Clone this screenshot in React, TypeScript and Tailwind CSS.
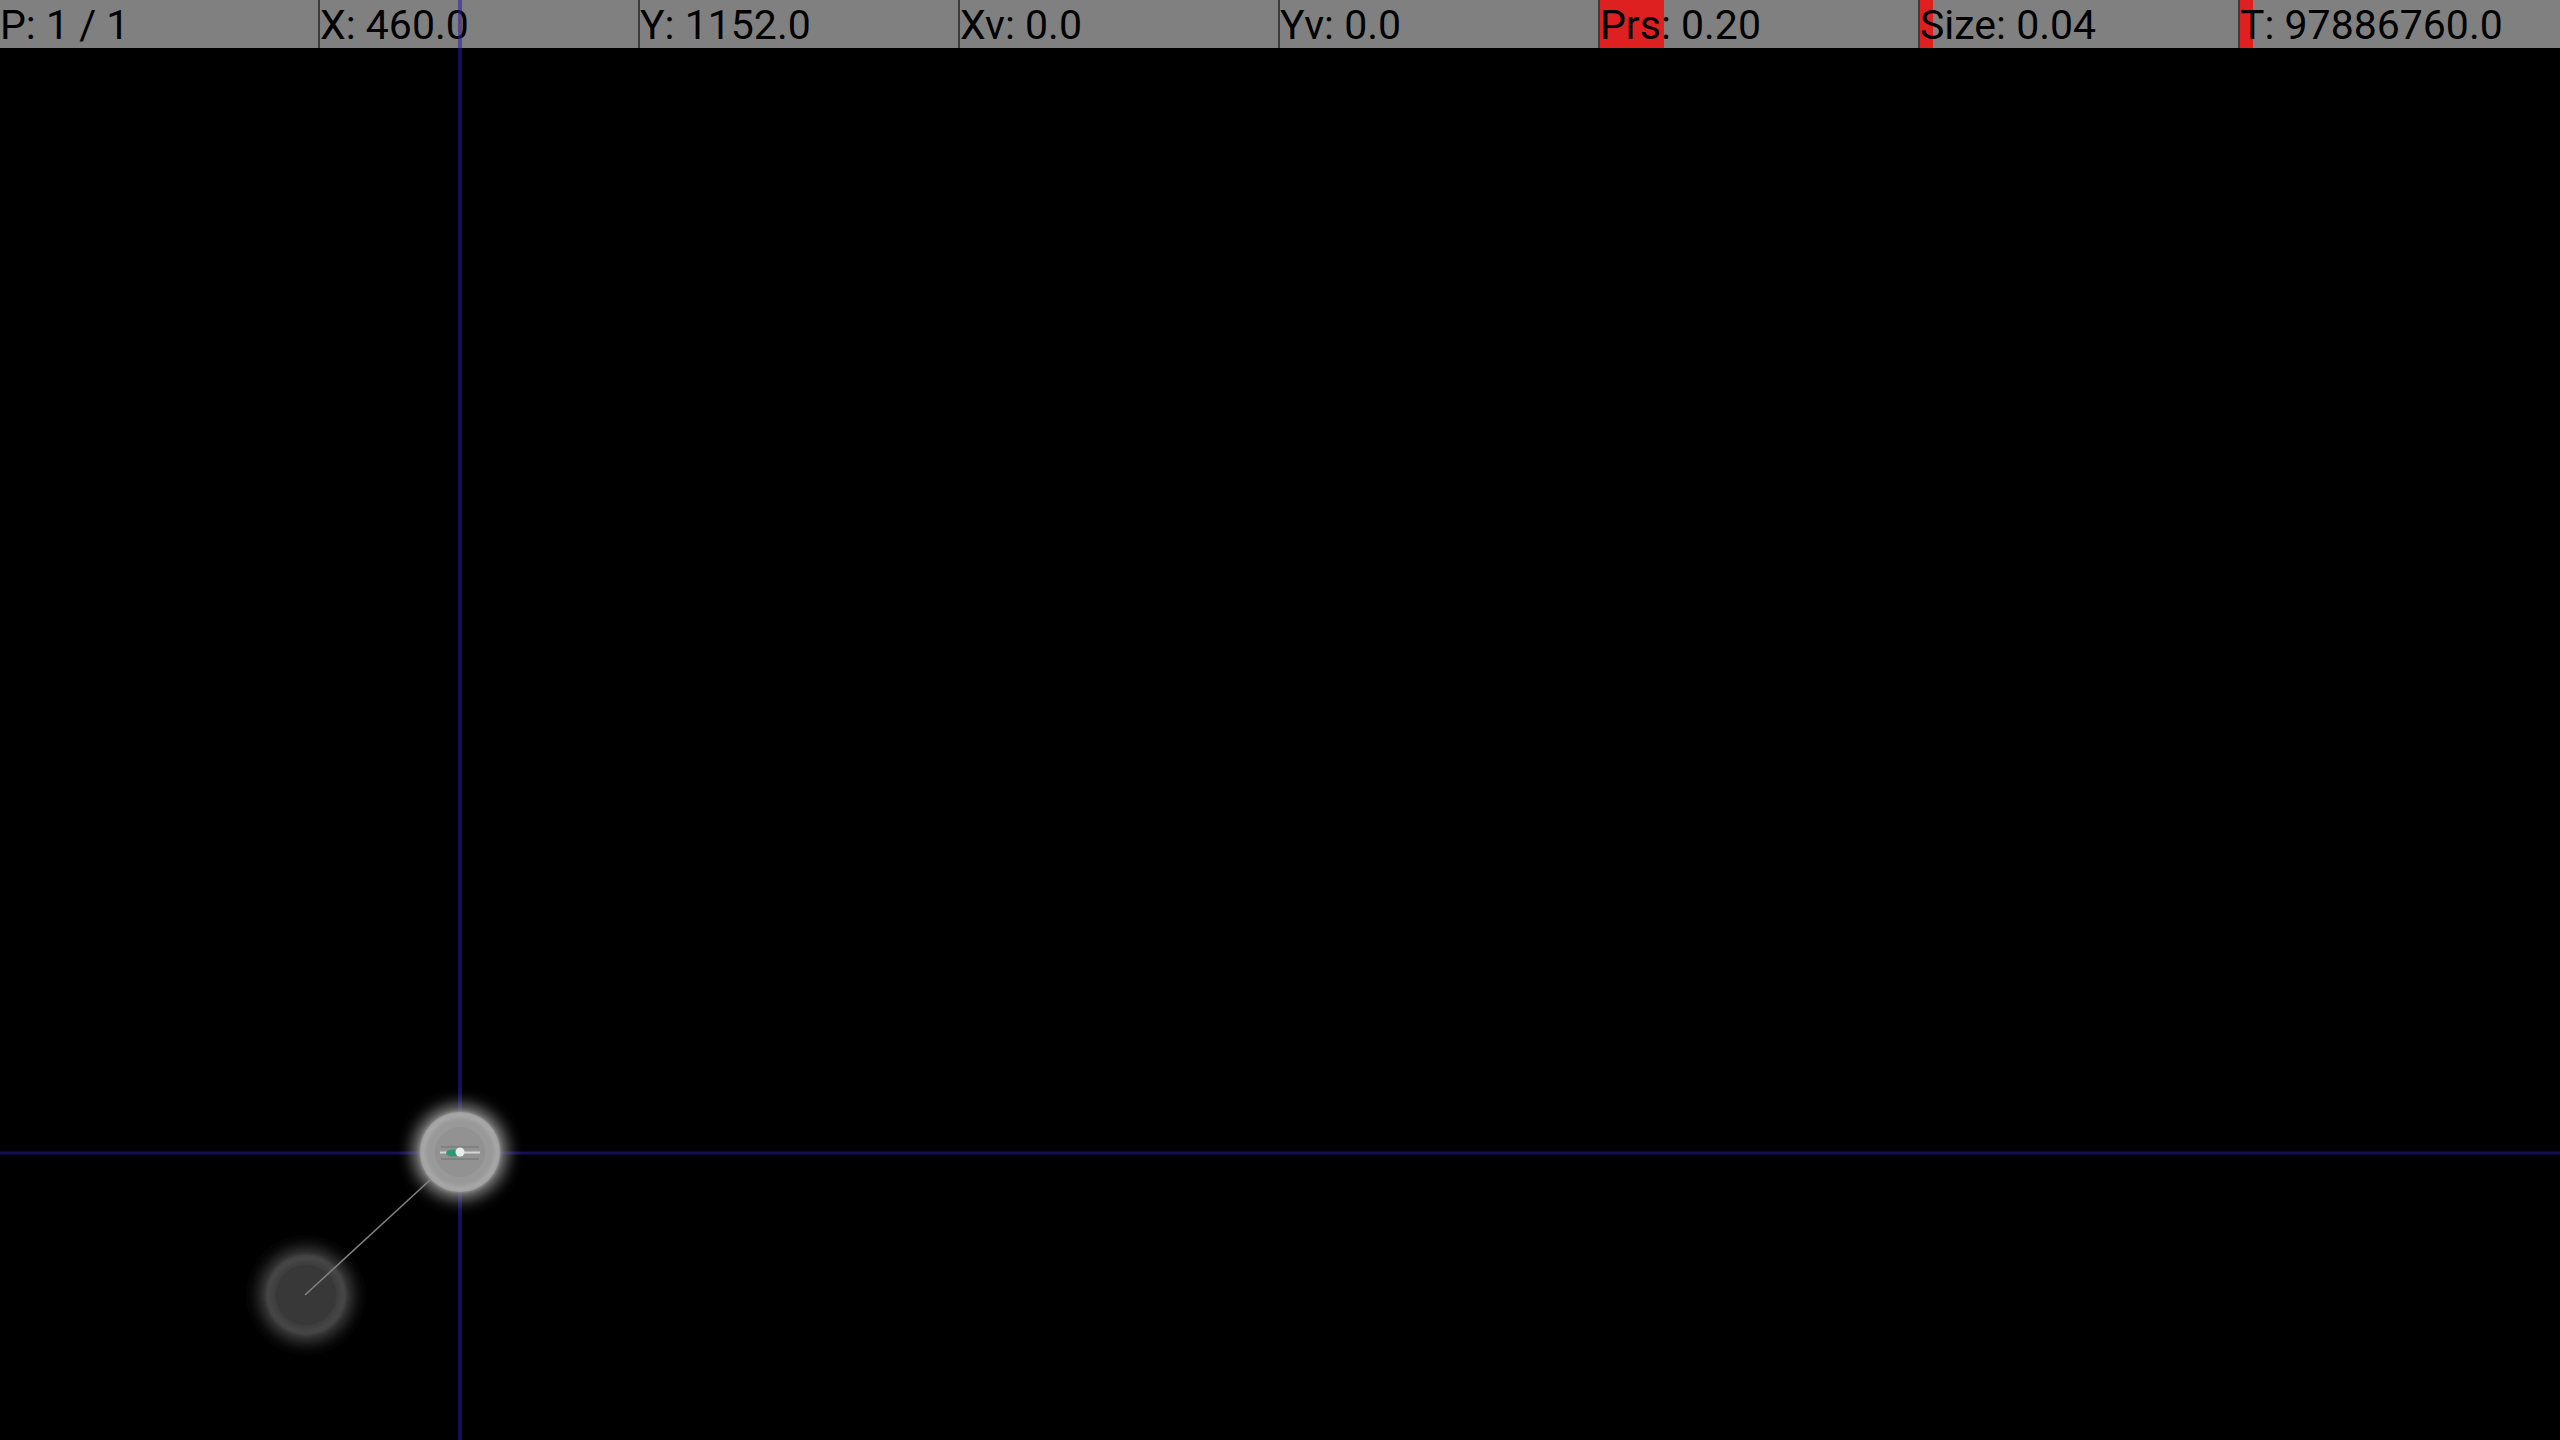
const columns = [
  { label: "P: 1 / 1", level: 0 },
  { label: "X: 460.0", level: 0 },
  { label: "Y: 1152.0", level: 0 },
  { label: "Xv: 0.0", level: 0 },
  { label: "Yv: 0.0", level: 0 },
  { label: "Prs: 0.20", level: 0.2 },
  { label: "Size: 0.04", level: 0.04 },
  { label: "T: 97886760.0", level: 0.04 },
];

const Pointers = () => (
  // touch trail + crosshair, drawn over the whole screen
  <svg
    className="absolute inset-0 pointer-events-none"
    width={2560}
    height={1440}
    viewBox="0 0 2560 1440"
  >
    <defs>
      <filter id="glow" x="-50%" y="-50%" width="200%" height="200%">
        <feGaussianBlur stdDeviation="8" />
      </filter>
      <filter id="soft" x="-50%" y="-50%" width="200%" height="200%">
        <feGaussianBlur stdDeviation="2" />
      </filter>
    </defs>

    {/* previous touch */}
    <circle cx={306} cy={1295} r={47} fill="#444444" filter="url(#glow)" />
    <circle cx={306} cy={1295} r={40} fill="#3e3e3e" />
    <circle cx={306} cy={1295} r={37} fill="none" stroke="#4a4a4a" strokeWidth={4} filter="url(#soft)" />
    <circle cx={306} cy={1295} r={30} fill="#383838" />

    {/* trail */}
    <line x1={305} y1={1295} x2={430} y2={1180} stroke="#808080" strokeWidth={1.6} />

    {/* crosshair */}
    <line x1={460} y1={0} x2={460} y2={1440} stroke="rgb(40,26,160)" strokeOpacity={0.55} strokeWidth={4} />
    <line x1={0} y1={1153} x2={2560} y2={1153} stroke="rgb(40,26,160)" strokeOpacity={0.55} strokeWidth={3} />

    {/* current touch */}
    <circle cx={460} cy={1152} r={47} fill="#8a8a8a" filter="url(#glow)" />
    <circle cx={460} cy={1152} r={40} fill="#9a9a9a" fillOpacity={0.92} />
    <circle cx={460} cy={1152} r={37} fill="none" stroke="#ababab" strokeWidth={5} filter="url(#soft)" />
    <circle cx={460} cy={1152} r={25} fill="#8e8e8e" fillOpacity={0.7} />

    {/* orientation marks */}
    <line x1={441} y1={1147} x2={479} y2={1147} stroke="#707070" strokeWidth={1} />
    <line x1={441} y1={1159} x2={479} y2={1159} stroke="#707070" strokeWidth={1} />
    <line x1={440} y1={1152.5} x2={480} y2={1152.5} stroke="#d6d6d6" strokeWidth={2} />
    <ellipse cx={453} cy={1153} rx={7} ry={3.5} fill="#2b9a74" />
    <circle cx={460} cy={1152} r={4.5} fill="#e6eeea" />
  </svg>
);

export default function App() {
  return (
    <div
      className="relative w-[2560px] h-[1440px] bg-black overflow-hidden"
      style={{ fontFamily: "Roboto, 'Liberation Sans', sans-serif" }}
    >
      <div className="flex h-[48px]">
        {columns.map((col, i) => (
          <div
            key={col.label}
            className={
              i < columns.length - 1
                ? "relative w-[320px] h-full bg-[#808080] border-r-2 border-[#3c3c3c]"
                : "relative w-[320px] h-full bg-[#808080]"
            }
          >
            {col.level > 0 && (
              <div
                className="absolute left-0 top-0 h-full bg-[#df2020]"
                style={{ width: Math.max(12, col.level * 320) }}
              />
            )}
            <span className="relative block pt-[1px] text-[41px] leading-[48px] text-black whitespace-pre">
              {col.label}
            </span>
          </div>
        ))}
      </div>
      <Pointers />
    </div>
  );
}
